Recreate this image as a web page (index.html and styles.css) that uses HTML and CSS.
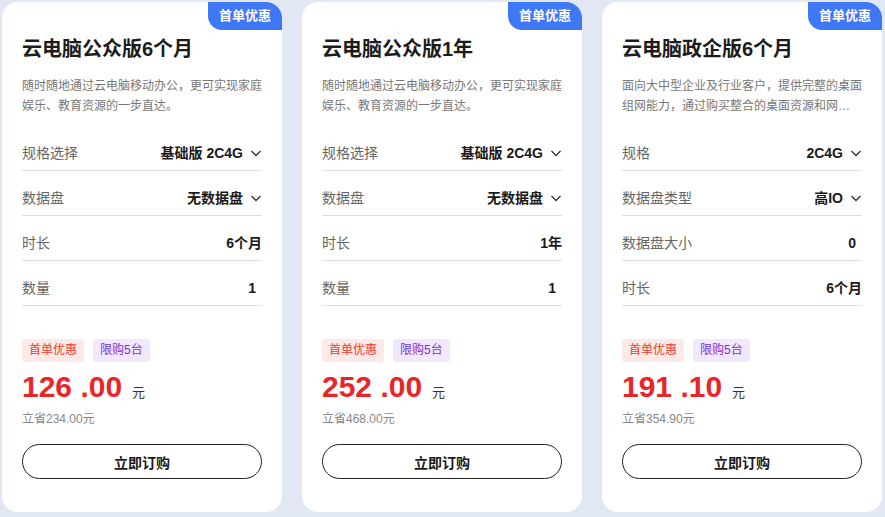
FILE: index.html
```html
<!DOCTYPE html>
<html lang="zh-CN">
<head>
    <meta charset="UTF-8">
    <title>云电脑套餐</title>
    <link rel="stylesheet" href="styles.css">
</head>
<body>
    <div class="cards">
        <!-- 套餐一 -->
        <div class="card">
            <span class="badge">首单优惠</span>
            <h2 class="title">云电脑公众版6个月</h2>
            <p class="desc">随时随地通过云电脑移动办公，更可实现家庭娱乐、教育资源的一步直达。</p>
            <ul class="specs">
                <li><span class="label">规格选择</span><span class="value">基础版 2C4G<svg class="arrow" viewBox="0 0 12 12"><path d="M1.5 4 L6 8.5 L10.5 4"/></svg></span></li>
                <li><span class="label">数据盘</span><span class="value">无数据盘<svg class="arrow" viewBox="0 0 12 12"><path d="M1.5 4 L6 8.5 L10.5 4"/></svg></span></li>
                <li><span class="label">时长</span><span class="value">6个月</span></li>
                <li><span class="label">数量</span><span class="value num">1</span></li>
            </ul>
            <div class="tags">
                <span class="tag red">首单优惠</span>
                <span class="tag purple">限购5台</span>
            </div>
            <div class="price"><span class="amount">126 .00</span><span class="unit">元</span></div>
            <p class="save">立省234.00元</p>
            <button class="buy">立即订购</button>
        </div>

        <!-- 套餐二 -->
        <div class="card">
            <span class="badge">首单优惠</span>
            <h2 class="title">云电脑公众版1年</h2>
            <p class="desc">随时随地通过云电脑移动办公，更可实现家庭娱乐、教育资源的一步直达。</p>
            <ul class="specs">
                <li><span class="label">规格选择</span><span class="value">基础版 2C4G<svg class="arrow" viewBox="0 0 12 12"><path d="M1.5 4 L6 8.5 L10.5 4"/></svg></span></li>
                <li><span class="label">数据盘</span><span class="value">无数据盘<svg class="arrow" viewBox="0 0 12 12"><path d="M1.5 4 L6 8.5 L10.5 4"/></svg></span></li>
                <li><span class="label">时长</span><span class="value">1年</span></li>
                <li><span class="label">数量</span><span class="value num">1</span></li>
            </ul>
            <div class="tags">
                <span class="tag red">首单优惠</span>
                <span class="tag purple">限购5台</span>
            </div>
            <div class="price"><span class="amount">252 .00</span><span class="unit">元</span></div>
            <p class="save">立省468.00元</p>
            <button class="buy">立即订购</button>
        </div>

        <!-- 套餐三 -->
        <div class="card">
            <span class="badge">首单优惠</span>
            <h2 class="title">云电脑政企版6个月</h2>
            <p class="desc">面向大中型企业及行业客户，提供完整的桌面组网能力，通过购买整合的桌面资源和网络资源，快速构建企业办公环境。</p>
            <ul class="specs">
                <li><span class="label">规格</span><span class="value">2C4G<svg class="arrow" viewBox="0 0 12 12"><path d="M1.5 4 L6 8.5 L10.5 4"/></svg></span></li>
                <li><span class="label">数据盘类型</span><span class="value">高IO<svg class="arrow" viewBox="0 0 12 12"><path d="M1.5 4 L6 8.5 L10.5 4"/></svg></span></li>
                <li><span class="label">数据盘大小</span><span class="value num">0</span></li>
                <li><span class="label">时长</span><span class="value">6个月</span></li>
            </ul>
            <div class="tags">
                <span class="tag red">首单优惠</span>
                <span class="tag purple">限购5台</span>
            </div>
            <div class="price"><span class="amount">191 .10</span><span class="unit">元</span></div>
            <p class="save">立省354.90元</p>
            <button class="buy">立即订购</button>
        </div>
    </div>
</body>
</html>
```

FILE: styles.css
```css
* {
    margin: 0;
    padding: 0;
    box-sizing: border-box;
}

body {
    background-color: #e1e8f3;
    font-family: "Liberation Sans", "Noto Sans CJK SC", sans-serif;
    color: #1f1f1f;
}

/* 卡片容器 */
.cards {
    display: flex;
    gap: 20px;
    padding: 2px;
}

.card {
    position: relative;
    width: 280px;
    height: 510px;
    background-color: #fff;
    border-radius: 16px;
    padding: 33px 20px 0;
    display: flex;
    flex-direction: column;
}

/* 右上角角标 */
.badge {
    position: absolute;
    top: 0;
    right: 0;
    width: 74px;
    height: 28px;
    line-height: 28px;
    text-align: center;
    background-color: #3f78f6;
    color: #fff;
    font-size: 13px;
    font-weight: bold;
    border-radius: 0 16px 0 14px;
}

.title {
    font-size: 20px;
    line-height: 28px;
    font-weight: bold;
    color: #1c1c1c;
}

.desc {
    margin-top: 13px;
    font-size: 12px;
    line-height: 20px;
    height: 40px;
    color: #777;
    overflow: hidden;
    display: -webkit-box;
    -webkit-line-clamp: 2;
    -webkit-box-orient: vertical;
}

/* 规格列表 */
.specs {
    list-style: none;
    margin-top: 10px;
}

.specs li {
    display: flex;
    justify-content: space-between;
    align-items: center;
    height: 45px;
    padding-top: 9px;
    border-bottom: 1px solid #dedede;
    font-size: 14px;
    line-height: 20px;
}

.label {
    color: #666;
}

.value {
    display: flex;
    align-items: center;
    font-size: 14px;
    font-weight: bold;
    color: #1a1a1a;
}

.value.num {
    padding-right: 6px;
}

.arrow {
    width: 12px;
    height: 12px;
    margin-left: 7px;
    fill: none;
    stroke: #333;
    stroke-width: 1.3;
}

/* 标签 */
.tags {
    display: flex;
    gap: 9px;
    margin-top: 33px;
}

.tag {
    height: 23px;
    line-height: 23px;
    padding: 0 7px;
    font-size: 12px;
    border-radius: 3px;
}

.tag.red {
    background-color: #fde9e7;
    color: #ee3a31;
}

.tag.purple {
    background-color: #f3e7fe;
    color: #7634d6;
}

/* 价格 */
.price {
    display: flex;
    align-items: baseline;
    margin-top: 7px;
    height: 36px;
}

.amount {
    font-size: 30px;
    line-height: 36px;
    font-weight: bold;
    color: #e8262a;
}

.unit {
    margin-left: 10px;
    font-size: 13px;
    color: #333;
}

.save {
    margin-top: 5px;
    font-size: 12px;
    line-height: 18px;
    color: #888;
}

.buy {
    margin-top: 16px;
    height: 35px;
    width: 100%;
    border: 1px solid #222;
    border-radius: 18px;
    background-color: #fff;
    font-family: inherit;
    font-size: 14px;
    font-weight: bold;
    color: #1a1a1a;
}
```
